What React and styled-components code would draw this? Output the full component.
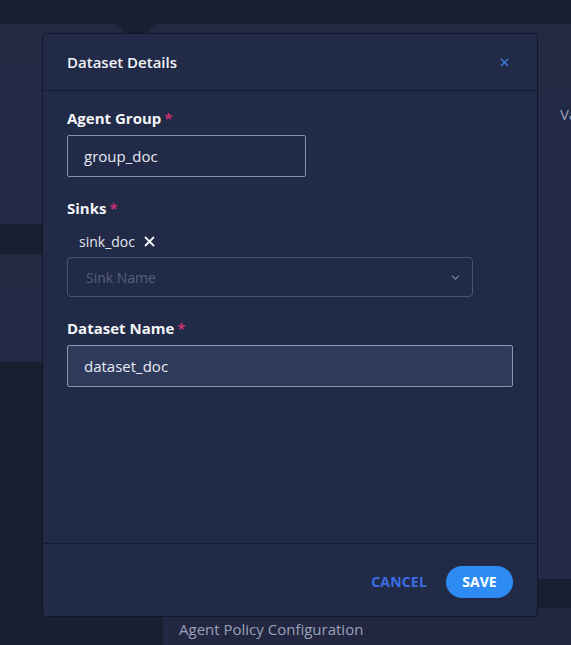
import React, { useEffect, useRef, useState } from 'react';
import styled, { createGlobalStyle } from 'styled-components';
import { FiChevronDown } from 'react-icons/fi';

const GlobalStyle = createGlobalStyle`
    html, body {
        margin: 0;
        padding: 0;
        background: #1a1e31;
        font-family: "Open Sans", "Noto Sans", sans-serif;
        overflow: hidden;
    }
`;

export default function App() {
    const [agentGroup, setAgentGroup] = useState('group_doc');
    const [datasetName, setDatasetName] = useState('dataset_doc');
    const [sinks, setSinks] = useState(['sink_doc']);
    const nameRef = useRef(null);

    useEffect(() => {
        const el = nameRef.current;
        if (el) {
            el.focus();
            el.setSelectionRange(el.value.length, el.value.length);
        }
    }, []);

    return (
        <>
            <GlobalStyle />
            <Page>
                <LeftColumn>
                    <Card height="200px">
                        <CardHeader height="38px" />
                        <CardBody />
                    </Card>
                    <Card height="108px">
                        <CardHeader height="38px" />
                        <CardBody />
                    </Card>
                </LeftColumn>
                <RightColumn>
                    <Card height="555px">
                        <CardHeader height="66px" />
                        <CardBody>
                            <FaintText>Va</FaintText>
                        </CardBody>
                    </Card>
                    <BottomCard>
                        <FaintText>Agent Policy Configuration</FaintText>
                    </BottomCard>
                </RightColumn>
            </Page>

            <Modal>
                <ModalHeader>
                    <Title>Dataset Details</Title>
                    <CloseButton aria-label="close">
                        <svg width="9" height="9" viewBox="0 0 9 9">
                            <path d="M1 1 L8 8 M8 1 L1 8" stroke="currentColor" strokeWidth="1.3" />
                        </svg>
                    </CloseButton>
                </ModalHeader>

                <ModalBody>
                    <Field>
                        <Label>Agent Group<Required>*</Required></Label>
                        <Input
                            width="239px"
                            value={agentGroup}
                            onChange={e => setAgentGroup(e.target.value)}
                        />
                    </Field>

                    <Field>
                        <Label>Sinks<Required>*</Required></Label>
                        <Chips>
                            {sinks.map(s => (
                                <Chip key={s}>
                                    {s}
                                    <ChipRemove onClick={() => setSinks(sinks.filter(x => x !== s))}>
                                        <svg width="11" height="11" viewBox="0 0 11 11">
                                            <path d="M1 1 L10 10 M10 1 L1 10" stroke="currentColor" strokeWidth="1.8" />
                                        </svg>
                                    </ChipRemove>
                                </Chip>
                            ))}
                        </Chips>
                        <Select>
                            <Placeholder>Sink Name</Placeholder>
                            <FiChevronDown size={13} />
                        </Select>
                    </Field>

                    <Field>
                        <Label>Dataset Name<Required>*</Required></Label>
                        <Input
                            ref={nameRef}
                            focused
                            value={datasetName}
                            onChange={e => setDatasetName(e.target.value)}
                        />
                    </Field>
                </ModalBody>

                <ModalFooter>
                    <CancelButton>Cancel</CancelButton>
                    <SaveButton>Save</SaveButton>
                </ModalFooter>
            </Modal>
        </>
    );
}

const Page = styled.div`
    height: 645px;
    display: grid;
    grid-template-columns: 122px 1fr;
    column-gap: 28px;
    padding-top: 24px;
    box-sizing: border-box;
`;

const LeftColumn = styled.div`
    display: flex;
    flex-direction: column;
    gap: 30px;
`;

const RightColumn = styled.div`
    display: flex;
    flex-direction: column;
    gap: 29px;
`;

const Card = styled.div`
    height: ${props => props.height};
    display: flex;
    flex-direction: column;
    border-radius: 0 8px 0 0;
    overflow: hidden;
    background: #222a46;
    flex-shrink: 0;

    ${RightColumn} & {
        border-radius: 8px 0 0 0;
    }
`;

const CardHeader = styled.div`
    height: ${props => props.height};
    background: #242843;
    flex-shrink: 0;
`;

const CardBody = styled.div`
    flex: 1;
    padding: 14px 0 0 410px;
`;

const FaintText = styled.div`
    font-size: 15px;
    color: #9aa1b8;
    white-space: nowrap;
`;

const BottomCard = styled.div`
    flex: 1;
    margin-left: 13px;
    background: #232742;
    padding: 11px 16px;
`;

const Modal = styled.div`
    position: absolute;
    left: 42px;
    top: 33px;
    width: 496px;
    height: 584px;
    box-sizing: border-box;
    background: #212a46;
    border: 1px solid #12162a;
    border-radius: 4px;
    display: flex;
    flex-direction: column;
`;

const ModalHeader = styled.div`
    height: 57px;
    box-sizing: border-box;
    display: flex;
    align-items: center;
    justify-content: space-between;
    padding: 0 28px 0 24px;
    border-bottom: 1px solid #151a2e;
`;

const Title = styled.h2`
    margin: 0;
    font-size: 15px;
    font-weight: 600;
    color: #f2f4f8;
`;

const CloseButton = styled.button`
    background: none;
    border: none;
    padding: 0;
    color: #3d7fe0;
    display: flex;
    cursor: pointer;
`;

const ModalBody = styled.div`
    flex: 1;
    padding: 18px 24px 0;
    display: flex;
    flex-direction: column;
    gap: 22px;
`;

const Field = styled.div`
    display: flex;
    flex-direction: column;
    align-items: flex-start;
`;

const Label = styled.label`
    font-size: 15px;
    font-weight: 700;
    color: #f4f5f8;
    line-height: 18px;
    margin-bottom: 8px;
`;

const Required = styled.span`
    color: #c2306f;
    margin-left: 3px;
    font-weight: 700;
`;

const Input = styled.input`
    width: ${props => props.width || '100%'};
    height: 42px;
    box-sizing: border-box;
    padding: 0 16px;
    font-family: inherit;
    font-size: 15px;
    color: #e6e9f2;
    background: ${props => (props.focused ? '#2f3b5b' : 'transparent')};
    border: 1px solid ${props => (props.focused ? '#8a93b0' : '#8790ad')};
    border-radius: 2px;
    outline: none;
    caret-color: #ffffff;
`;

const Chips = styled.div`
    height: 32px;
    display: flex;
    align-items: center;
    gap: 8px;
    padding-left: 12px;
`;

const Chip = styled.div`
    display: flex;
    align-items: center;
    gap: 9px;
    font-size: 14px;
    color: #e3e6ef;
`;

const ChipRemove = styled.span`
    display: flex;
    color: #f4f5f8;
    cursor: pointer;
`;

const Select = styled.div`
    width: 406px;
    height: 40px;
    box-sizing: border-box;
    display: flex;
    align-items: center;
    justify-content: space-between;
    padding: 0 10px 0 18px;
    border: 1px solid #4a5372;
    border-radius: 4px;
    color: #7d86a3;
`;

const Placeholder = styled.span`
    font-size: 14px;
    color: #56607e;
`;

const ModalFooter = styled.div`
    height: 73px;
    box-sizing: border-box;
    border-top: 1px solid #151a2e;
    display: flex;
    align-items: center;
    justify-content: flex-end;
    gap: 19px;
    padding: 3px 24px 0;
`;

const CancelButton = styled.button`
    background: none;
    border: none;
    padding: 0;
    font-family: inherit;
    font-size: 14px;
    font-weight: 700;
    text-transform: uppercase;
    letter-spacing: 0.2px;
    color: #3b6ee6;
    cursor: pointer;
`;

const SaveButton = styled.button`
    width: 67px;
    height: 32px;
    border: none;
    border-radius: 16px;
    background: #2e8bf4;
    font-family: inherit;
    font-size: 14px;
    font-weight: 700;
    text-transform: uppercase;
    color: #ffffff;
    cursor: pointer;
`;
